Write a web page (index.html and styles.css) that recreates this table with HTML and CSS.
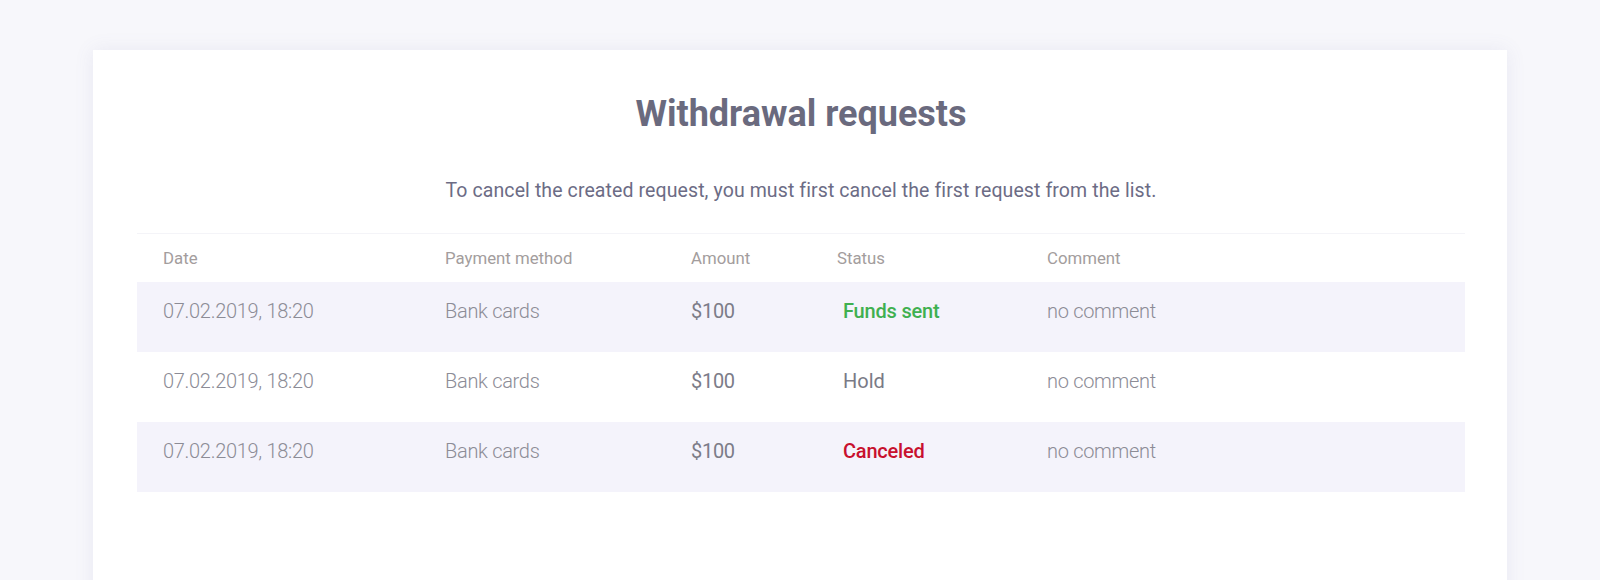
FILE: index.html
```html
<!DOCTYPE html>
<html lang="en">
<head>
<meta charset="utf-8">
<title>Withdrawal requests</title>
<link rel="stylesheet" href="styles.css">
</head>
<body>
<main class="page">
  <section class="card">
    <h1 class="title">Withdrawal requests</h1>
    <p class="subtitle">To cancel the created request, you must first cancel the first request from the list.</p>
    <div class="table">
      <div class="row head">
        <div>Date</div>
        <div>Payment method</div>
        <div>Amount</div>
        <div>Status</div>
        <div>Comment</div>
      </div>
      <div class="row body shaded">
        <div class="date">07.02.2019, 18:20</div>
        <div class="method">Bank cards</div>
        <div class="amount">$100</div>
        <div><span class="status sent">Funds sent</span></div>
        <div class="comment">no comment</div>
      </div>
      <div class="row body">
        <div class="date">07.02.2019, 18:20</div>
        <div class="method">Bank cards</div>
        <div class="amount">$100</div>
        <div><span class="status hold">Hold</span></div>
        <div class="comment">no comment</div>
      </div>
      <div class="row body shaded">
        <div class="date">07.02.2019, 18:20</div>
        <div class="method">Bank cards</div>
        <div class="amount">$100</div>
        <div><span class="status canceled">Canceled</span></div>
        <div class="comment">no comment</div>
      </div>
    </div>
  </section>
</main>
</body>
</html>
```

FILE: styles.css
```css
html, body {
  margin: 0;
  padding: 0;
}
body {
  background: #f7f7fb;
  font-family: Roboto, "Noto Sans", sans-serif;
  overflow: hidden;
  height: 580px;
}
.page {
  padding: 50px 93px 0 93px;
}
.card {
  background: #ffffff;
  box-shadow: 0 0 18px rgba(110, 110, 170, 0.10);
  padding: 44px 42px 120px 44px;
  min-height: 600px;
  box-sizing: border-box;
}
.title {
  margin: 0;
  text-align: center;
  font-size: 36px;
  line-height: 40px;
  font-weight: 700;
  color: #6a6a7e;
}
.subtitle {
  margin: 45px 0 30px;
  text-align: center;
  font-size: 19.5px;
  line-height: 24px;
  letter-spacing: 0.1px;
  color: #6c6c85;
}
.table {
  border-top: 1px solid #f4f4f8;
}
.row {
  display: grid;
  grid-template-columns: 282px 246px 146px 210px 1fr;
  padding-left: 26px;
  align-items: center;
}
.row.head {
  height: 48px;
  font-size: 16.8px;
  color: #a39d9d;
}
.row.body {
  height: 70px;
  box-sizing: border-box;
  padding-bottom: 12px;
  font-size: 20px;
  letter-spacing: -0.3px;
}
.row.shaded {
  background: #f4f3fb;
}
.date, .method, .comment {
  font-weight: 300;
  color: #8c8c96;
}
.amount {
  font-weight: 400;
  color: #7c7c88;
}
.status {
  display: inline-block;
  padding-left: 6px;
  font-weight: 500;
  letter-spacing: -0.2px;
}
.status.sent { color: #3fb050; }
.status.hold { color: #7a7a86; font-weight: 400; letter-spacing: 0; }
.status.canceled { color: #c8102e; }
```
